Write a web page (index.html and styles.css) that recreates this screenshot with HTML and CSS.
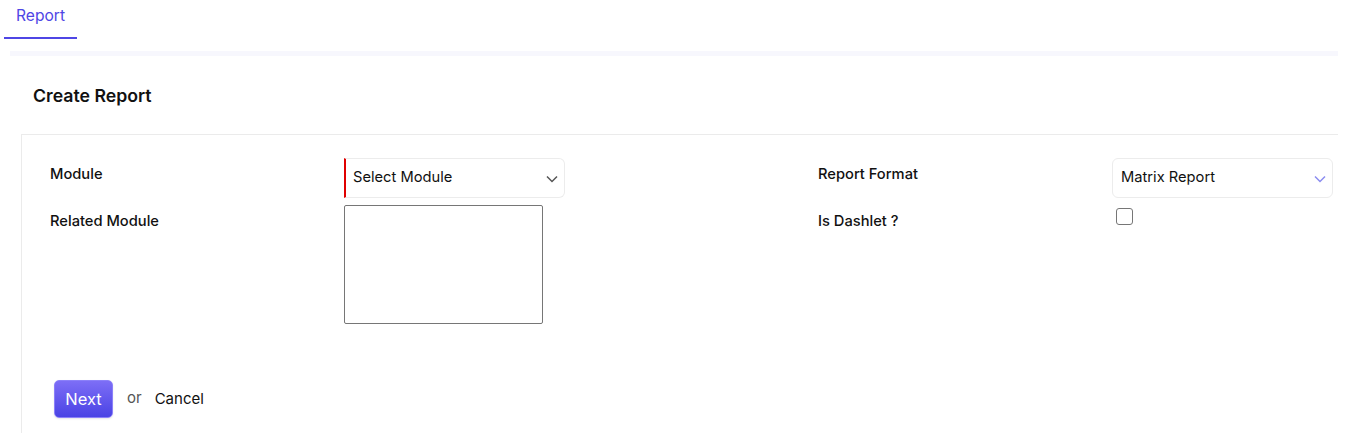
FILE: index.html
```html
<!DOCTYPE html>
<html lang="en">
<head>
<meta charset="UTF-8" />
<meta name="viewport" content="width=device-width, initial-scale=1" />
<title>Create Report</title>
<link rel="stylesheet" href="styles.css">
</head>
<body>
  <div class="tabs">
    <a class="tab active" href="#">Report</a>
  </div>
  <div class="band"></div>

  <div class="panel">
    <h2 class="panel-title">Create Report</h2>

    <div class="card">
      <div class="form-grid">
        <label class="form-label">Module</label>
        <div class="field">
          <div class="select required">
            <span>Select Module</span>
            <svg class="chev" width="12" height="8" viewBox="0 0 12 8"><path d="M1 1.5l5 5 5-5" fill="none" stroke="#555" stroke-width="1.5"/></svg>
          </div>
        </div>
        <label class="form-label">Report Format</label>
        <div class="field">
          <div class="select">
            <span>Matrix Report</span>
            <svg class="chev" width="12" height="8" viewBox="0 0 12 8"><path d="M1 1.5l5 5 5-5" fill="none" stroke="#8b8cf0" stroke-width="1.5"/></svg>
          </div>
        </div>

        <label class="form-label">Related Module</label>
        <div class="field">
          <div class="listbox"></div>
        </div>
        <label class="form-label">Is Dashlet ?</label>
        <div class="field">
          <span class="checkbox"></span>
        </div>
      </div>

      <div class="actions">
        <button class="btn-next">Next</button>
        <span class="or">or</span>
        <a class="cancel" href="#">Cancel</a>
      </div>
    </div>
  </div>
</body>
</html>
```

FILE: styles.css
```css
body {
  margin: 0;
  font-family: 'Inter', 'Liberation Sans', sans-serif;
  color: #111;
  background: #fff;
  height: 433px;
  overflow: hidden;
}

/* Tabs */
.tabs {
  display: flex;
  padding-left: 4px;
  height: 39px;
}

.tab {
  display: block;
  padding: 6px 12px 0;
  font-size: 15.6px;
  line-height: 20px;
  color: #4f46e5;
  text-decoration: none;
}

.tab.active {
  border-bottom: 2px solid #4f46e5;
  height: 31px;
}

.band {
  margin: 12px 8px 0 10px;
  height: 5px;
  background: #f7f7fd;
}

/* Panel */
.panel {
  margin: 0 8px 0 10px;
}

.panel-title {
  margin: 0;
  padding: 29px 0 0 23px;
  height: 49px;
  box-sizing: border-box;
  font-size: 17.7px;
  font-weight: 600;
  line-height: 21px;
  color: #111;
}

.card {
  margin: 29px 0 0 11px;
  border-top: 1px solid #ebebeb;
  border-left: 1px solid #ebebeb;
  padding: 23px 0 60px 28px;
  min-height: 300px;
}

.form-grid {
  display: grid;
  grid-template-columns: 294px 474px 294px 1fr;
  row-gap: 7px;
}

.form-label {
  padding-top: 8px;
  font-size: 14.7px;
  font-weight: 500;
  line-height: 17px;
  color: #111;
}

.select {
  display: flex;
  align-items: center;
  justify-content: space-between;
  width: 221px;
  height: 40px;
  box-sizing: border-box;
  padding: 0 6px 3px 8px;
  border: 1px solid #ececec;
  border-radius: 6px;
  font-size: 14.7px;
  color: #111;
}

.select.required {
  border-left: 2px solid #e00000;
  border-radius: 0 6px 6px 0;
  padding-left: 7px;
}

.chev {
  margin-top: 4px;
}

.listbox {
  width: 199px;
  height: 119px;
  box-sizing: border-box;
  border: 1px solid #767676;
  border-radius: 2px;
}

.checkbox {
  display: block;
  margin: 3px 0 0 4px;
  width: 17px;
  height: 17px;
  box-sizing: border-box;
  border: 1px solid #767676;
  border-radius: 3px;
}

/* Actions */
.actions {
  display: flex;
  align-items: center;
  margin-top: 56px;
  padding-left: 4px;
}

.btn-next {
  width: 59px;
  height: 38px;
  border: 1px solid #8b80f9;
  border-radius: 5px;
  background: linear-gradient(180deg, #7d6ef6, #4a43e4);
  color: #fff;
  font-family: inherit;
  font-size: 16.5px;
  font-weight: 400;
  box-shadow: 0 1px 2px rgba(0,0,0,0.1);
}

.or {
  margin-left: 14px;
  margin-top: -3px;
  font-size: 15px;
  color: #555;
}

.cancel {
  margin-left: 13px;
  margin-top: -1px;
  font-size: 15px;
  color: #111;
  text-decoration: none;
}
```
